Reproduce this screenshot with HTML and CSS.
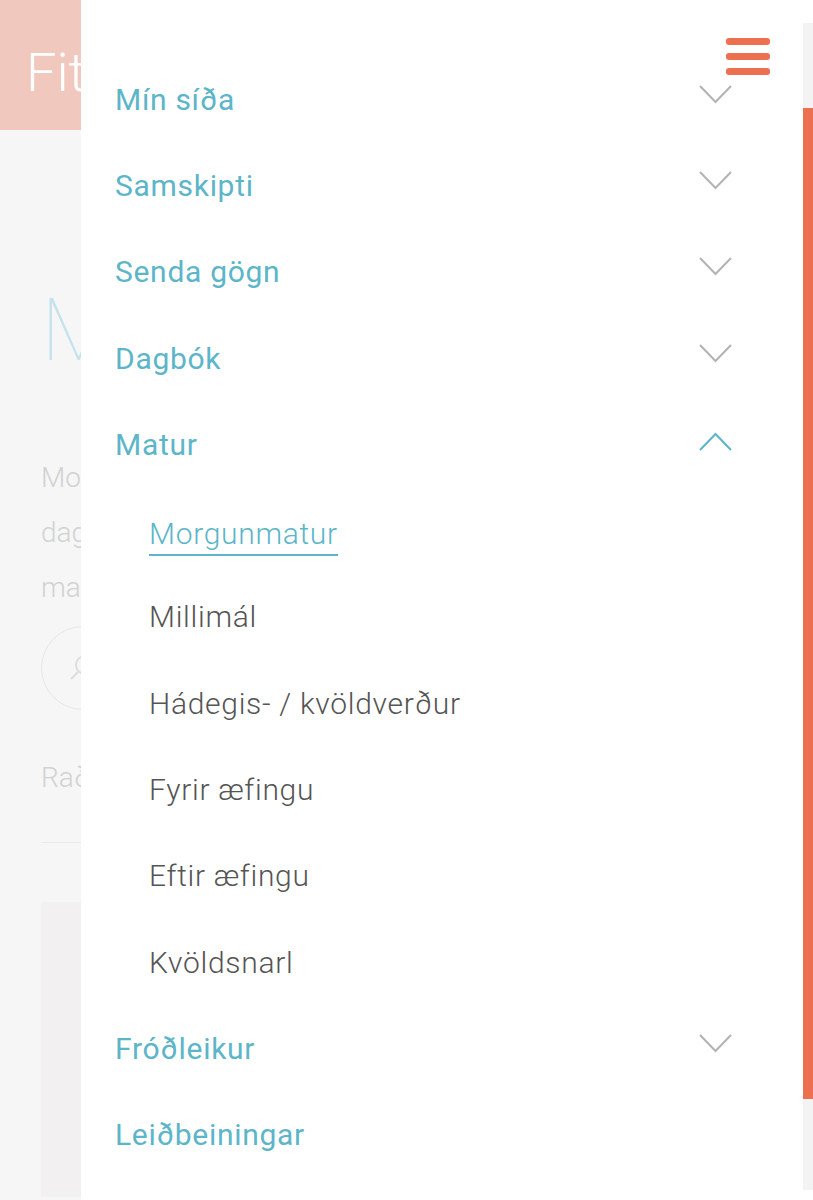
FILE: index.html
```html
<!DOCTYPE html>
<html lang="is">
<head>
    <meta charset="UTF-8">
    <meta name="viewport" content="width=device-width, initial-scale=1.0">
    <title>Fit - Matur</title>
    <link rel="stylesheet" href="styles.css">
</head>
<body>

    <div class="page">
        <div class="page-header">Fitness</div>
        <div class="page-content">
            <div class="page-title">Matur</div>
            <p class="page-text">
                <span>Morgunmatur er mikilvægasta máltíð</span>
                <span>dagsins, hér finnur þú uppskriftir að</span>
                <span>margvíslegum morgunmat.</span>
            </p>
            <div class="search-circle">
                <svg width="40" height="40" viewBox="0 0 40 40"><circle cx="22" cy="17" r="9" fill="none" stroke="#ddd" stroke-width="2"/><line x1="15" y1="24" x2="8" y2="31" stroke="#ddd" stroke-width="2"/></svg>
            </div>
            <div class="page-sort">Raða eftir</div>
            <div class="page-line"></div>
            <div class="page-photo"></div>
        </div>
    </div>

    <nav class="drawer">
        <ul class="menu">
            <li class="menu-item">Mín síða <svg class="chev" viewBox="0 0 33 19"><polyline points="1,1 16.5,17 32,1"/></svg></li>
            <li class="menu-item">Samskipti <svg class="chev" viewBox="0 0 33 19"><polyline points="1,1 16.5,17 32,1"/></svg></li>
            <li class="menu-item">Senda gögn <svg class="chev" viewBox="0 0 33 19"><polyline points="1,1 16.5,17 32,1"/></svg></li>
            <li class="menu-item">Dagbók <svg class="chev" viewBox="0 0 33 19"><polyline points="1,1 16.5,17 32,1"/></svg></li>
            <li class="menu-item open">Matur <svg class="chev" viewBox="0 0 33 19"><polyline points="1,18 16.5,2 32,18"/></svg></li>
            <li class="sub-item active"><span>Morgunmatur</span></li>
            <li class="sub-item"><span>Millimál</span></li>
            <li class="sub-item"><span>Hádegis- / kvöldverður</span></li>
            <li class="sub-item"><span>Fyrir æfingu</span></li>
            <li class="sub-item"><span>Eftir æfingu</span></li>
            <li class="sub-item"><span>Kvöldsnarl</span></li>
            <li class="menu-item">Fróðleikur <svg class="chev" viewBox="0 0 33 19"><polyline points="1,1 16.5,17 32,1"/></svg></li>
            <li class="menu-item">Leiðbeiningar</li>
        </ul>
        <div class="scroll-track"><div class="scroll-thumb"></div></div>
    </nav>

    <button class="burger" aria-label="Valmynd">
        <span></span><span></span><span></span>
    </button>

</body>
</html>
```

FILE: styles.css
```css
html, body {
    margin: 0;
    padding: 0;
    height: 100%;
    overflow: hidden;
    font-family: Roboto, "Liberation Sans", sans-serif;
    background-color: #f6f6f6;
}

/* síðan fyrir aftan valmyndina */
.page {
    width: 813px;
    height: 1200px;
}

.page-header {
    height: 130px;
    background-color: #f1c8bd;
    color: #fff;
    font-size: 54px;
    font-weight: 300;
    padding-left: 26px;
    line-height: 146px;
    box-sizing: border-box;
    white-space: nowrap;
}

.page-content {
    padding: 0 41px;
}

.page-title {
    color: #c4e3ec;
    font-size: 88px;
    font-weight: 100;
    margin-top: 150px;
    line-height: 100px;
}

.page-text {
    color: #d2d2d2;
    font-size: 28px;
    font-weight: 300;
    line-height: 55px;
    margin: 70px 0 0;
    white-space: nowrap;
}

.page-text span {
    display: block;
}

.search-circle {
    width: 82px;
    height: 82px;
    border: 1px solid #e6e6e6;
    border-radius: 50%;
    margin-top: 11px;
    display: flex;
    align-items: center;
    justify-content: center;
}

.page-sort {
    color: #d2d2d2;
    font-size: 28px;
    font-weight: 300;
    margin-top: 51px;
}

.page-line {
    height: 1px;
    background-color: #ebebeb;
    margin-top: 48px;
}

.page-photo {
    height: 295px;
    margin-top: 59px;
    background: linear-gradient(160deg, #f2f0f0 0%, #f2f0f0 55%, #eeedf3 75%, #dedeea 100%);
}

/* valmyndin */
.drawer {
    position: absolute;
    top: 0;
    left: 81px;
    width: 732px;
    height: 1200px;
    background-color: #fff;
}

.menu {
    list-style: none;
    margin: 0;
    padding: 56px 0 0;
    width: 722px;
}

.menu-item, .sub-item {
    height: 86.3px;
    display: flex;
    align-items: center;
    font-size: 30px;
    letter-spacing: 0.7px;
    white-space: nowrap;
}

.menu-item {
    color: #5cb5c9;
    padding-left: 34px;
    padding-right: 72px;
    justify-content: space-between;
}

.chev {
    width: 33px;
    height: 19px;
    fill: none;
    stroke: #b3b3b3;
    stroke-width: 2;
    margin-right: -1px;
    margin-top: -10px;
}

.menu-item.open .chev {
    stroke: #5cb5c9;
    margin-top: -6px;
}

.sub-item {
    color: #555;
    font-weight: 300;
    padding-left: 68px;
}

.sub-item.active span {
    color: #5cb5c9;
    border-bottom: 2px solid #5cb5c9;
    padding-bottom: 3px;
    margin-top: 10px;
}

.scroll-track {
    position: absolute;
    top: 23px;
    right: 0;
    width: 10px;
    height: 1167px;
    background-color: #f3f3f3;
}

.scroll-thumb {
    margin-top: 85px;
    height: 991px;
    background-color: #ec6f50;
}

.burger {
    position: absolute;
    top: 38px;
    left: 726px;
    width: 44px;
    padding: 0;
    border: none;
    background: none;
    display: flex;
    flex-direction: column;
    gap: 8px;
}

.burger span {
    height: 7px;
    border-radius: 3px;
    background-color: #ec6f50;
}
```
